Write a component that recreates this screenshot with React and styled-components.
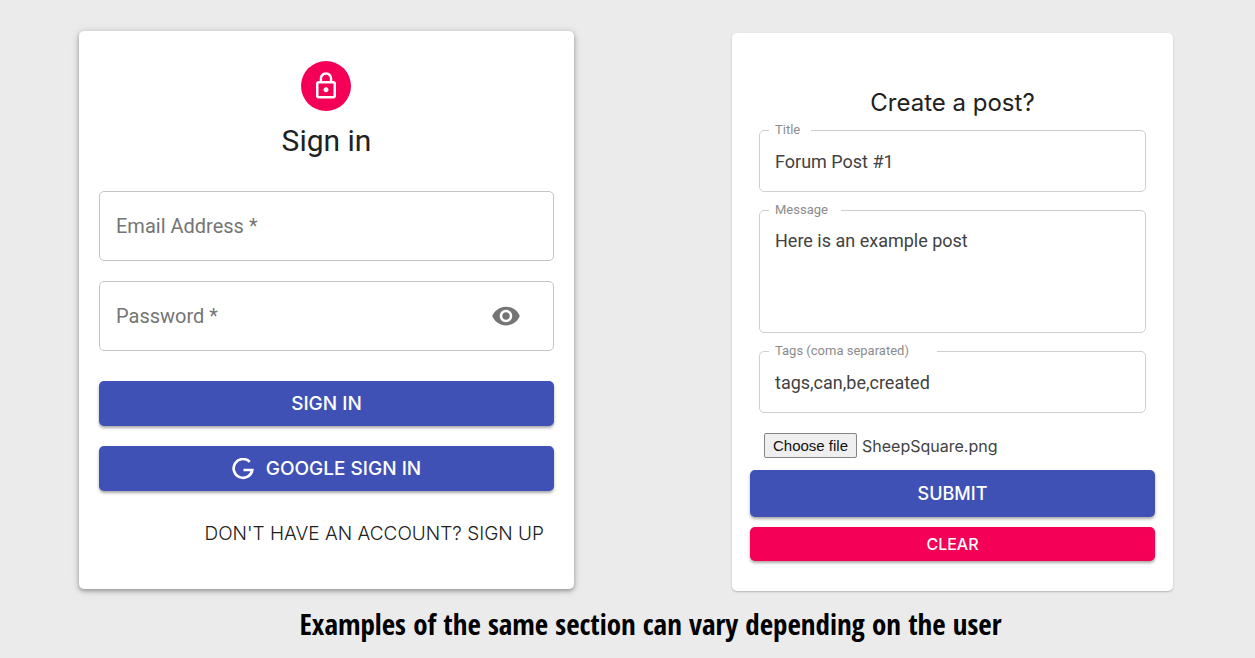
import React, { useState } from "react";
import styled, { createGlobalStyle, css } from "styled-components";

const GlobalStyle = createGlobalStyle`
  *, *::before, *::after { box-sizing: border-box; }
  body {
    margin: 0;
    background: #ebebeb;
    color: #212121;
    font-family: Roboto, "Liberation Sans", sans-serif;
  }
`;

const wideFont = css`font-family: Inter, "Liberation Sans", sans-serif;`;

const Page = styled.main`
  padding: 31px 82px 12px 79px;
`;

const Examples = styled.div`
  display: grid;
  grid-template-columns: 495fr 441fr;
  align-items: start;
  gap: 158px;
`;

const Card = styled.form`
  display: flex;
  flex-direction: column;
  background: #fff;
  border-radius: 5px;
`;

const SignInCard = styled(Card)`
  padding: 30px 20px 40px;
  box-shadow: 0 2px 4px rgba(0, 0, 0, 0.3), 0 1px 10px rgba(0, 0, 0, 0.14);
`;

const PostCard = styled(Card)`
  margin-top: 2px;
  padding: 53px 18px 30px;
  box-shadow: 0 1px 2px rgba(0, 0, 0, 0.24);
`;

const AvatarRow = styled.div`
  display: flex;
  justify-content: center;
  padding-right: 1px;
`;

const Avatar = styled.div`
  display: grid;
  place-items: center;
  width: 50px;
  height: 50px;
  border-radius: 50%;
  background: #f50057;
  color: #fff;
`;

const SignInTitle = styled.h1`
  margin: 10px 0 30px;
  font-size: 30px;
  font-weight: 400;
  line-height: 40px;
  text-align: center;
`;

const PostTitle = styled.h2`
  ${wideFont}
  margin: 0 0 2px;
  font-size: 24px;
  font-weight: 400;
  line-height: 34px;
  text-align: center;
`;

const Stack = styled.div`
  display: flex;
  flex-direction: column;
  gap: 20px;
`;

const Field = styled.div`
  position: relative;
  display: flex;
  align-items: center;
  height: 70px;
  padding: 0 16px;
  border: 1px solid #c4c4c4;
  border-radius: 5px;
`;

const FieldLabel = styled.label`
  position: absolute;
  left: 16px;
  color: #757575;
  font-size: 20px;
  line-height: 28px;
  pointer-events: none;
`;

const TextInput = styled.input`
  flex: 1;
  min-width: 0;
  padding: 0;
  border: 0;
  outline: 0;
  background: none;
  color: #212121;
  font-family: inherit;
  font-size: 20px;
  line-height: 28px;
  &:not(:placeholder-shown) + ${FieldLabel} { visibility: hidden; }
`;

const IconButton = styled.button`
  display: grid;
  place-items: center;
  margin-right: 16px;
  padding: 0;
  border: 0;
  background: none;
  color: #757575;
  cursor: pointer;
`;

const Button = styled.button`
  ${wideFont}
  display: flex;
  align-items: center;
  justify-content: center;
  gap: 12px;
  height: ${(p) => p.$height || 45}px;
  border: 0;
  border-radius: 5px;
  background: ${(p) => (p.$secondary ? "#f50057" : "#3f51b5")};
  box-shadow: 0 2px 3px rgba(0, 0, 0, 0.34);
  color: #fff;
  font-size: ${(p) => p.$size || 19}px;
  font-weight: 500;
  text-transform: uppercase;
  cursor: pointer;
`;

const SignInActions = styled(Stack)`
  margin-top: 30px;
`;

const SignUpLink = styled.a`
  ${wideFont}
  align-self: flex-end;
  margin: 28px 10px 0 0;
  color: #212121;
  font-size: 19px;
  font-weight: 300;
  line-height: 30px;
  text-decoration: none;
  text-transform: uppercase;
`;

const PostFields = styled.div`
  display: flex;
  flex-direction: column;
  gap: 10px;
  margin: 0 9px;
`;

const Outline = styled.fieldset`
  min-width: 0;
  margin: 0;
  padding: 0 9px;
  border: 1px solid #cfcfcf;
  border-radius: 5px;
`;

const Legend = styled.legend`
  min-width: ${(p) => p.$notch}px;
  padding: 0 6px;
  color: #8c8c8c;
  font-size: 13px;
  line-height: 16px;
`;

const outlinedText = css`
  display: block;
  width: 100%;
  border: 0;
  outline: 0;
  background: none;
  color: #424242;
  font-family: inherit;
  font-size: 18px;
  line-height: 24px;
`;

const OutlinedInput = styled.input`
  ${outlinedText}
  height: 53px;
  padding: 0 6px 7px;
`;

const OutlinedArea = styled.textarea`
  ${outlinedText}
  height: 114px;
  padding: 11px 6px;
  resize: none;
`;

const FileRow = styled.div`
  display: flex;
  align-items: center;
  gap: 5px;
  margin: 20px 14px 12px;
`;

const FileInput = styled.input`
  position: absolute;
  width: 1px;
  height: 1px;
  opacity: 0;
`;

const FileLabel = styled.label`
  padding: 0 8px;
  border: 1px solid #858585;
  border-radius: 2px;
  background: #efefef;
  color: #111;
  font-family: "Liberation Sans", sans-serif;
  font-size: 15px;
  line-height: 23px;
  cursor: pointer;
`;

const FileName = styled.span`
  ${wideFont}
  color: #424242;
  font-size: 16px;
  line-height: 24px;
`;

const PostActions = styled(Stack)`
  gap: 10px;
`;

const Caption = styled.p`
  margin: 13px 0 0 49px;
  color: #000;
  font-family: "Open Sans Condensed", "Liberation Sans Narrow", "DejaVu Sans Condensed", sans-serif;
  font-size: 29px;
  font-weight: 700;
  line-height: 40px;
  text-align: center;
`;

const LockIcon = () => (
  <svg width="30" height="30" viewBox="0 0 24 24" fill="currentColor" aria-hidden="true">
    <path d="M12 17c1.1 0 2-.9 2-2s-.9-2-2-2-2 .9-2 2 .9 2 2 2zm6-9h-1V6c0-2.76-2.24-5-5-5S7 3.240 7 6v2H6c-1.100 0-2 .9-2 2v10c0 1.100.9 2 2 2h12c1.100 0 2-.9 2-2V10c0-1.100-.9-2-2-2zM8.900 6c0-1.710 1.390-3.100 3.100-3.100s3.100 1.390 3.100 3.100v2H8.900V6zM18 20H6V10h12v10z" />
  </svg>
);

const EyeIcon = () => (
  <svg width="30" height="30" viewBox="0 0 24 24" fill="currentColor" aria-hidden="true">
    <path d="M12 4.500C7 4.500 2.730 7.610 1 12c1.730 4.390 6 7.500 11 7.500s9.270-3.110 11-7.500c-1.730-4.390-6-7.500-11-7.500zM12 17c-2.760 0-5-2.240-5-5s2.240-5 5-5 5 2.240 5 5-2.240 5-5 5zm0-8c-1.660 0-3 1.340-3 3s1.340 3 3 3 3-1.340 3-3-1.340-3-3-3z" />
  </svg>
);

const GoogleIcon = () => (
  <svg width="22" height="22" viewBox="0 0 22 22" fill="none" stroke="currentColor" strokeWidth="2.600" aria-hidden="true">
    <path d="M17.800 3.900A9.400 9.400 0 1 0 20.300 12H11.500" />
  </svg>
);

function SignIn() {
  const [visible, setVisible] = useState(false);
  return (
    <SignInCard onSubmit={(e) => e.preventDefault()}>
      <AvatarRow><Avatar><LockIcon /></Avatar></AvatarRow>
      <SignInTitle>Sign in</SignInTitle>
      <Stack>
        <Field>
          <TextInput id="email" type="email" placeholder=" " />
          <FieldLabel htmlFor="email">Email Address *</FieldLabel>
        </Field>
        <Field>
          <TextInput id="password" type={visible ? "text" : "password"} placeholder=" " />
          <FieldLabel htmlFor="password">Password *</FieldLabel>
          <IconButton type="button" aria-label="Toggle password visibility" onClick={() => setVisible(!visible)}>
            <EyeIcon />
          </IconButton>
        </Field>
      </Stack>
      <SignInActions>
        <Button type="submit">Sign In</Button>
        <Button type="button"><GoogleIcon />Google Sign In</Button>
      </SignInActions>
      <SignUpLink href="#signup">Don't have an account? Sign Up</SignUpLink>
    </SignInCard>
  );
}

function CreatePost() {
  const [fileName, setFileName] = useState("SheepSquare.png");
  return (
    <PostCard onSubmit={(e) => e.preventDefault()}>
      <PostTitle>Create a post?</PostTitle>
      <PostFields>
        <Outline>
          <Legend $notch={42}><label htmlFor="title">Title</label></Legend>
          <OutlinedInput id="title" defaultValue="Forum Post #1" />
        </Outline>
        <Outline>
          <Legend $notch={72}><label htmlFor="message">Message</label></Legend>
          <OutlinedArea id="message" defaultValue="Here is an example post" />
        </Outline>
        <Outline>
          <Legend $notch={168}><label htmlFor="tags">Tags (coma separated)</label></Legend>
          <OutlinedInput id="tags" defaultValue="tags,can,be,created" />
        </Outline>
      </PostFields>
      <FileRow>
        <FileInput id="file" type="file" onChange={(e) => setFileName(e.target.files[0]?.name || "")} />
        <FileLabel htmlFor="file">Choose file</FileLabel>
        <FileName>{fileName}</FileName>
      </FileRow>
      <PostActions>
        <Button type="submit" $height={47} $size={18}>Submit</Button>
        <Button type="reset" $height={34} $size={16} $secondary>Clear</Button>
      </PostActions>
    </PostCard>
  );
}

export default function App() {
  return (
    <Page>
      <GlobalStyle />
      <Examples>
        <SignIn />
        <CreatePost />
      </Examples>
      <Caption>Examples of the same section can vary depending on the user</Caption>
    </Page>
  );
}
